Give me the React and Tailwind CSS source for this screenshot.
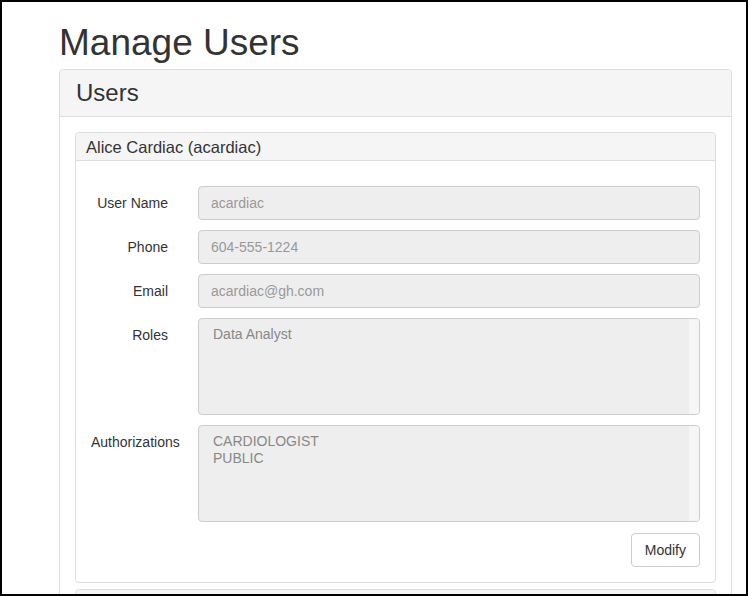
const FIELDS = [
  { label: 'User Name', value: 'acardiac' },
  { label: 'Phone', value: '604-555-1224' },
  { label: 'Email', value: 'acardiac@gh.com' },
]

const LISTS = [
  { label: 'Roles', items: ['Data Analyst'], gap: 'mt-[1px]' },
  { label: 'Authorizations', items: ['CARDIOLOGIST', 'PUBLIC'], gap: 'mt-[2px]' },
]

function Row({ label, children, first }) {
  return (
    <div className={`flex items-start ${first ? '' : 'mt-[10px]'}`}>
      <label className="w-[77px] shrink-0 whitespace-nowrap pt-[7px] text-right text-[14px] leading-[20px] text-[#333]">
        {label}
      </label>
      <div className="ml-[30px] flex-1">{children}</div>
    </div>
  )
}

function ListBox({ items }) {
  return (
    <div className="flex h-[97px] overflow-hidden rounded-[4px] border border-[#ccc] bg-[#eee]">
      <div className="flex-1 px-[14px] pt-[7px] text-[14px] leading-[17px] text-[#888]">
        {items.map((it) => (
          <div key={it}>{it}</div>
        ))}
      </div>
      <div className="w-[10px] bg-[#f6f6f6]" />
    </div>
  )
}

export default function App() {
  return (
    <div className="box-border h-[596px] w-[748px] overflow-hidden border-2 border-black bg-white font-['Liberation_Sans',Arial,sans-serif]">
      <div className="ml-[57px] w-[673px] pt-[21px]">
        <h1 className="mb-[6px] text-[37px] leading-[40px] text-[#333]">Manage Users</h1>

        <section className="rounded-[4px] border border-[#ddd] bg-white">
          <header className="flex h-[47px] items-center rounded-t-[4px] border-b border-[#ddd] bg-[#f5f5f5] px-[16px]">
            <h2 className="text-[24px] leading-[28px] text-[#333]">Users</h2>
          </header>

          <div className="p-[15px]">
            <article className="rounded-[4px] border border-[#ddd] bg-white">
              <header className="flex h-[28px] items-center rounded-t-[4px] border-b border-[#ddd] bg-[#f5f5f5] px-[10px]">
                <h3 className="text-[16.5px] leading-[20px] text-[#333]">Alice Cardiac (acardiac)</h3>
              </header>
              <div className="px-[15px] pb-[15px] pt-[25px]">
                {FIELDS.map((f, i) => (
                  <Row key={f.label} label={f.label} first={i === 0}>
                    <div className="flex h-[34px] items-center rounded-[4px] border border-[#ccc] bg-[#eee] px-[12px] text-[14px] text-[#999]">
                      {f.value}
                    </div>
                  </Row>
                ))}
                {LISTS.map((l) => (
                  <div key={l.label} className={l.gap}>
                    <Row label={l.label}>
                      <ListBox items={l.items} />
                    </Row>
                  </div>
                ))}
                <div className="mt-[11px] flex justify-end">
                  <button className="h-[34px] rounded-[4px] border border-[#ccc] bg-white px-[13px] text-[14px] text-[#333]">
                    Modify
                  </button>
                </div>
              </div>
            </article>

            <article className="mt-[6px] rounded-[4px] border border-[#ddd] bg-white">
              <header className="h-[28px] rounded-t-[4px] bg-[#f5f5f5]" />
            </article>
          </div>
        </section>
      </div>
    </div>
  )
}
